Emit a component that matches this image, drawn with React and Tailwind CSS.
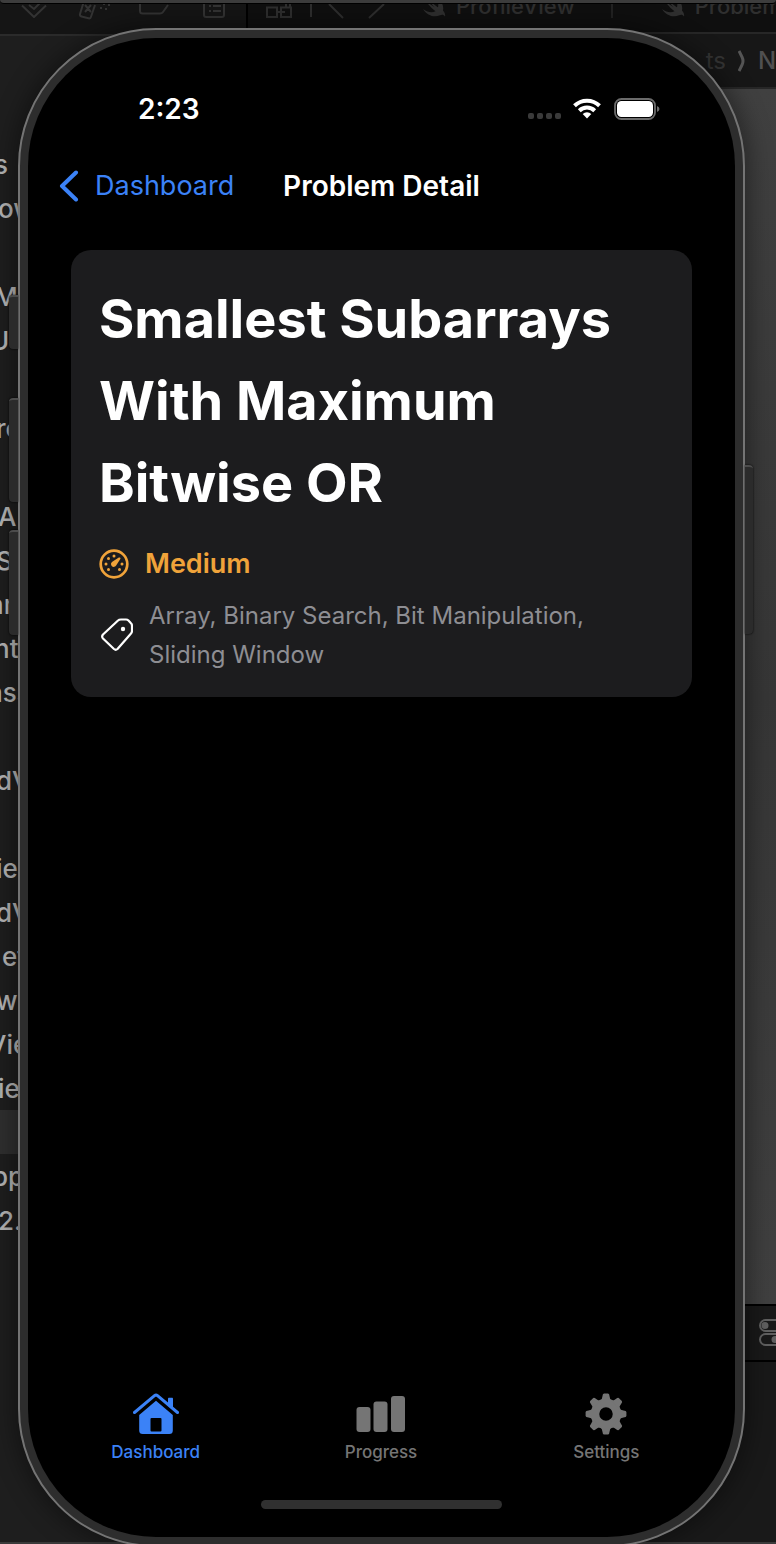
import React from "react";

const navigatorRows = [
  { text: "s", shift: "-ml-1.5" },
  { text: "ow", shift: "-ml-0.5" },
  { text: "", shift: "ml-0" },
  { text: "M", shift: "-ml-1.5" },
  { text: "U", shift: "-ml-2.5" },
  { text: "", shift: "ml-0" },
  { text: "re", shift: "-ml-1" },
  { text: "", shift: "ml-0" },
  { text: "A", shift: "-ml-0.5" },
  { text: "S", shift: "-ml-1" },
  { text: "nr", shift: "-ml-3" },
  { text: "nte", shift: "-ml-1.5" },
  { text: "ass", shift: "-ml-3" },
  { text: "", shift: "ml-0" },
  { text: "dV", shift: "-ml-1" },
  { text: "", shift: "ml-0" },
  { text: "ie", shift: "-ml-1" },
  { text: "dV", shift: "-ml-1" },
  { text: "et", shift: "ml-0.5" },
  { text: "w", shift: "-ml-1" },
  { text: "Vie", shift: "-ml-3" },
  { text: "ie", shift: "-ml-0.5" },
  { text: "", shift: "ml-0", selected: true },
  { text: "pp", shift: "-ml-2" },
  { text: "2.", shift: "-ml-0.5" },
];

function SwiftIcon() {
  return (
    <svg width="26" height="24" viewBox="0 0 26 24" className="shrink-0" fill="#2f2f2f" aria-hidden="true">
      <path d="M1 15c5 3.600 9 4 12.500 2.300C9 14 5.500 9.500 3.500 6.500c3.500 3 7 5.500 9 6.700C10 10.500 7.500 7 6.500 5.500c3.500 3.500 7.500 6.500 9.500 7.700C16.800 10 16 6 14 2.500c5 3.500 8.200 9 7 14 2.500 3 2.300 5.200 2 6-1.300-2.300-3.500-2-5-1.200C12.500 24 5 21.500 1 15z" />
    </svg>
  );
}

function NavigatorToolbar() {
  return (
    <svg width="226" height="31" viewBox="0 4 226 31" fill="none" stroke="#333" strokeWidth="2" aria-hidden="true">
      <path d="M22 5.500 34 17 46 5.500" strokeLinejoin="round" />
      <path d="M29 5l5 4 6-6" />
      <path d="M84 1l-4 13q-.5 2 1.500 2.500l7 1.800q2 .5 2.500-1.500L95 5" strokeLinejoin="round" />
      <path d="M85 5l6 7M91 5l-6 7M100 8h2M105 9h2M103 4h2M108 5h2" />
      <path d="M140 4v7q0 2.500 2.500 2.500H160q2 0 3-1.500l5-7" />
      <path d="M204 4v11q0 2 2 2h16q2 0 2-2V4" />
      <path d="M209 6h2M213 6h8M209 11h2M213 11h8" />
    </svg>
  );
}

function Navigator() {
  return (
    <aside className="flex w-[248px] shrink-0 flex-col border-r-2 border-black bg-[#1e1e1e]">
      <div className="h-[30px] overflow-hidden bg-[#151515]">
        <NavigatorToolbar />
      </div>
      <ul className="border-t-2 border-[#2b2b2b] pt-[106px] text-[26px] font-medium text-[#b4b4b4]">
        {navigatorRows.map((row, i) => (
          <li
            key={i}
            className={
              row.selected
                ? "flex h-[44px] items-center overflow-hidden bg-[#2f2f2f]"
                : "flex h-[44px] items-center overflow-hidden"
            }
          >
            <span className={row.shift}>{row.text}</span>
          </li>
        ))}
      </ul>
    </aside>
  );
}

function EditorPane() {
  return (
    <div className="flex min-w-0 flex-1 flex-col bg-[#171717]">
      <div className="flex h-[28px] items-start overflow-hidden bg-[#0f0f0f] text-[22px] leading-[24px] font-medium text-[#2f2f2f]">
        <svg width="174" height="28" viewBox="248 4 174 28" className="shrink-0" fill="none" stroke="#2e2e2e" strokeWidth="2" aria-hidden="true">
          <path d="M267 7.500h10v9.500h-10zM281 7.500h10v9.500h-10zM270 2h7v2M283 2h7v5M277 12h8M286 4v4" />
          <path d="M311 0v17" />
          <path d="M329 4l14 14M384 4l-15 14" />
        </svg>
        <div className="-mt-2.5 flex items-center gap-2">
          <SwiftIcon />
          <span>ProfileView</span>
        </div>
        <div className="-mt-2.5 ml-9 flex shrink-0 items-center gap-2 border-l-2 border-[#222] pl-12">
          <SwiftIcon />
          <span>ProblemDetailView</span>
        </div>
      </div>
      <div className="flex h-[57px] items-center justify-end gap-3 overflow-hidden border-y-2 border-[#272727] bg-[#171717] text-[24px] whitespace-nowrap text-[#505050]">
        <span className="text-[#343434]">ts</span>
        <svg width="8" height="22" viewBox="0 0 8 22" fill="none" stroke="#555" strokeWidth="3" aria-hidden="true">
          <path d="M1 1l3 6q2 4 0 8l-3 6" />
        </svg>
        <span className="w-[18px] font-medium">No</span>
      </div>
      <div className="flex-1 bg-linear-to-b from-[#404040] via-[#363636] to-[#404040]" />
      <div className="flex h-[58px] items-center justify-end overflow-hidden border-y-2 border-black bg-[#191919]">
        <svg width="18" height="28" viewBox="0 0 18 28" fill="none" stroke="#606060" strokeWidth="2" aria-hidden="true">
          <rect x="2" y="1" width="26" height="11" rx="5.500" />
          <rect x="2" y="15" width="26" height="11" rx="5.500" />
          <circle cx="7" cy="6.500" r="2.500" fill="#606060" />
          <circle cx="17" cy="20.500" r="2.500" fill="#606060" />
        </svg>
      </div>
      <div className="h-[180px] bg-[#191919]" />
    </div>
  );
}

function EditorWindow() {
  return (
    <div className="col-start-1 row-start-1 flex min-w-0 flex-col overflow-hidden border-b-2 border-[#3a3a3a] bg-[#151515]">
      <div className="h-1 rounded-b-lg border-b border-black bg-[#3d3d3d]" />
      <div className="flex min-h-0 flex-1">
        <Navigator />
        <EditorPane />
      </div>
    </div>
  );
}

function StatusBar() {
  return (
    <div className="mt-[51px] flex h-10 items-center pr-[75px] pl-[110px]">
      <span className="text-[28px] font-semibold text-white">2:23</span>
      <svg width="34" height="24" viewBox="0 0 34 24" className="ml-auto" fill="#3a3a3a" aria-hidden="true">
        <rect x="0" y="16" width="6" height="6" rx="2" />
        <rect x="9" y="16" width="6" height="6" rx="2" />
        <rect x="18" y="16" width="6" height="6" rx="2" />
        <rect x="27" y="16" width="6" height="6" rx="2" />
      </svg>
      <svg width="28" height="22" viewBox="0 0 28 22" className="ml-[11px]" fill="none" stroke="#fff" strokeWidth="4" aria-hidden="true">
        <path d="M1.500 7.700a18 18 0 0 1 25 0" />
        <path d="M6.300 12.700a11 11 0 0 1 15.400 0" />
        <path d="M14 20.500l-4.300-4.500a6.500 6.500 0 0 1 8.600 0z" fill="#fff" stroke="none" />
      </svg>
      <svg width="46" height="22" viewBox="0 0 46 22" className="ml-[13px]" aria-hidden="true">
        <rect x="1" y="1" width="40" height="20" rx="6.500" fill="none" stroke="#6b6b6b" strokeWidth="1.800" />
        <rect x="3" y="3" width="36" height="16" rx="4.500" fill="#fff" />
        <path d="M43 8q2.500 1 2.500 3T43 14z" fill="#6b6b6b" />
      </svg>
    </div>
  );
}

function NavigationBar() {
  return (
    <header className="mt-[25px] grid h-16 grid-cols-[1fr_auto_1fr] items-center px-[31px]">
      <a href="#dashboard" className="flex items-center gap-4 text-[27px] text-[#3b82f7]">
        <svg width="20" height="32" viewBox="0 0 20 32" fill="none" stroke="currentColor" strokeWidth="4" strokeLinecap="round" strokeLinejoin="round" aria-hidden="true">
          <path d="M17 2.500 3 16l14 13.500" />
        </svg>
        Dashboard
      </a>
      <h1 className="text-[28px] font-semibold text-white">Problem Detail</h1>
    </header>
  );
}

function GaugeIcon() {
  return (
    <svg width="30" height="30" viewBox="0 0 30 30" fill="#f0a33a" aria-hidden="true">
      <circle cx="15" cy="15" r="13.300" fill="none" stroke="#f0a33a" strokeWidth="2.700" />
      <circle cx="15" cy="7" r="1.500" />
      <circle cx="9.500" cy="9.500" r="1.500" />
      <circle cx="7" cy="15" r="1.500" />
      <circle cx="9.500" cy="20.500" r="1.500" />
      <circle cx="20.500" cy="20.500" r="1.500" />
      <circle cx="23" cy="15" r="1.500" />
      <path d="M20.800 8.600q1.200.2.500 1.500l-4 6.200a2.800 2.800 0 1 1-4-3.600l6.500-4.200z" />
    </svg>
  );
}

function TagIcon() {
  return (
    <svg width="32" height="34" viewBox="0 0 32 34" fill="none" stroke="#fff" strokeWidth="2.200" strokeLinejoin="round" aria-hidden="true">
      <path d="M17 2.500Q18 1.500 20 1.500h5q1.500 0 2.500 1l2.500 2.700q1 1 1 2.800v5q0 1.500-1.200 2.700L16.500 31q-1.800 1.500-3.500 0L2 20.500q-1.700-2 0-4z" />
      <circle cx="22" cy="11" r="2.200" fill="#fff" stroke="none" />
    </svg>
  );
}

function ProblemCard() {
  return (
    <article className="mx-[43px] mt-8 rounded-[20px] bg-[#1c1c1e] px-7 pt-[28px] pb-[23px]">
      <h2 className="text-[54px] leading-[82px] font-bold text-white">
        Smallest Subarrays With Maximum Bitwise OR
      </h2>
      <p className="mt-5 flex h-10 items-center gap-4 text-[27px] font-semibold text-[#f0a33a]">
        <GaugeIcon />
        Medium
      </p>
      <div className="mt-3 flex items-center gap-4 pl-[2px]">
        <TagIcon />
        <p className="flex-1 text-[24px] leading-[39px] text-[#8e8e93]">
          Array, Binary Search, Bit Manipulation, Sliding Window
        </p>
      </div>
    </article>
  );
}

function HomeIcon() {
  return (
    <svg width="46" height="42" viewBox="0 0 46 42" fill="currentColor" aria-hidden="true">
      <path d="M1.500 19.500 21.500 2.700q1.500-1.200 3 0L44.500 19.500" fill="none" stroke="currentColor" strokeWidth="3" strokeLinecap="round" />
      <path d="M35 5.500q0-.7.700-.7h3.600q.7 0 .7.700V17l-5-4.200z" />
      <path fillRule="evenodd" d="M23 7.800 39.800 22v15.500q0 3.500-3.500 3.500H9.700q-3.500 0-3.500-3.500V22zM17.500 26v11.500q0 1 1 1h9q1 0 1-1V26q0-1-1-1h-9q-1 0-1 1z" />
    </svg>
  );
}

function BarsIcon() {
  return (
    <svg width="50" height="42" viewBox="0 0 50 42" fill="currentColor" aria-hidden="true">
      <rect x="0.500" y="14" width="14" height="25" rx="3" />
      <rect x="17.500" y="8.500" width="14" height="30.500" rx="3" />
      <rect x="35" y="3" width="14" height="36" rx="3" />
    </svg>
  );
}

function GearIcon() {
  const teeth = [0, 45, 90, 135, 180, 225, 270, 315];
  return (
    <svg width="42" height="42" viewBox="-21 -21 42 42" fill="currentColor" aria-hidden="true">
      <circle r="11" fill="none" stroke="currentColor" strokeWidth="8.500" />
      {teeth.map((a) => (
        <path key={a} transform={`rotate(${a})`} d="M-5.800-13q2-1.500 2.200-4.500Q-3.400-20.400-2-20.400H2q1.400 0 1.600 2.900.2 3 2.200 4.500z" />
      ))}
    </svg>
  );
}

function TabBar() {
  const tabs = [
    { label: "Dashboard", Icon: HomeIcon, color: "text-[#3b82f7]", current: true },
    { label: "Progress", Icon: BarsIcon, color: "text-[#757575]" },
    { label: "Settings", Icon: GearIcon, color: "text-[#757575]" },
  ];
  return (
    <nav className="mr-4 ml-[15px] mt-auto mb-9 grid grid-cols-3">
      {tabs.map(({ label, Icon, color, current }) => (
        <button
          key={label}
          type="button"
          aria-current={current ? "page" : undefined}
          className={`flex flex-col items-center gap-[5px] text-[17px] leading-6 font-medium ${color}`}
        >
          <Icon />
          {label}
        </button>
      ))}
    </nav>
  );
}

function Phone() {
  const key = "absolute border-t-2 border-[#4c4c4c] bg-[#2b2b2b] shadow-[0_0_2px_#000]";
  return (
    <div className="relative col-start-1 row-start-1 mt-7 mr-[31px] -mb-[3px] ml-[18px] flex flex-col">
      <div className="relative flex flex-1 flex-col rounded-[138px] border-2 border-[#747474] bg-[#2d2d2d] p-2 shadow-[0_0_24px_4px_rgba(0,0,0,0.4)]">
        <main className="flex flex-1 flex-col rounded-[128px] bg-black">
          <StatusBar />
          <NavigationBar />
          <ProblemCard />
          <TabBar />
          <div className="mx-auto mb-[28px] h-[9px] w-[241px] rounded-full bg-[#303030]" />
        </main>
      </div>
      <div className={`${key} top-[267px] -left-[9px] h-[54px] w-[9px] rounded-l-sm`} />
      <div className={`${key} top-[370px] -left-[9px] h-[104px] w-[9px] rounded-l-sm`} />
      <div className={`${key} top-[502px] -left-[9px] h-[105px] w-[9px] rounded-l-sm`} />
      <div className={`${key} top-[437px] -right-[8px] h-[169px] w-[8px] rounded-r-sm`} />
    </div>
  );
}

export default function App() {
  return (
    <div className="grid min-h-screen grid-cols-1 overflow-hidden bg-[#151515] font-['Inter',sans-serif]">
      <EditorWindow />
      <Phone />
    </div>
  );
}
